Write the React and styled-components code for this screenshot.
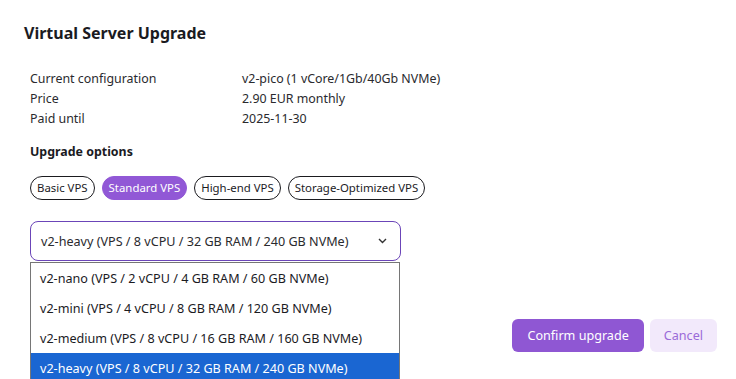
import React from "react";
import styled, { createGlobalStyle } from "styled-components";

const Global = createGlobalStyle`
  html, body { margin: 0; padding: 0; background: #ffffff; }
  body { font-family: "Noto Sans", "Open Sans", sans-serif; color: #1b1b1f; }
  * { box-sizing: border-box; }
`;

const Dialog = styled.div`
  width: 736px;
  height: 379px;
  overflow: hidden;
  padding: 22px 19px 0 24px;
  display: flex;
  flex-direction: column;
`;

const Title = styled.h2`
  margin: 0;
  font-size: 16px;
  font-weight: 700;
  line-height: 22px;
  color: #1b1b1f;
`;

const Info = styled.div`
  margin: 25px 0 0 6px;
  display: grid;
  grid-template-columns: 212px 1fr;
  font-size: 12.4px;
  line-height: 20px;
  color: #2a2a2e;
`;

const Section = styled.div`
  margin: 13px 0 0 6px;
  font-size: 12.4px;
  font-weight: 700;
  line-height: 20px;
`;

const Chips = styled.div`
  margin: 14px 0 0 6px;
  display: flex;
  gap: 7px;
`;

const Chip = styled.button`
  height: 24px;
  padding: 0 6px;
  border-radius: 12px;
  font-family: inherit;
  font-size: 11.4px;
  line-height: 22px;
  border: 1px solid ${(p) => (p.$active ? "#9158d6" : "#1b1b1f")};
  background: ${(p) => (p.$active ? "#9158d6" : "#ffffff")};
  color: ${(p) => (p.$active ? "#ffffff" : "#1b1b1f")};
  cursor: pointer;
`;

const SelectWrap = styled.div`
  position: relative;
  margin: 21px 0 0 6px;
  width: 371px;
`;

const SelectBox = styled.div`
  height: 40px;
  border: 1px solid #6b45b8;
  border-radius: 8px;
  display: flex;
  align-items: center;
  justify-content: space-between;
  padding: 0 13px 0 10px;
  font-size: 12.6px;
  color: #2a2a2e;
`;

const List = styled.ul`
  position: absolute;
  top: 41px;
  left: 0;
  width: 370px;
  margin: 0;
  padding: 0;
  list-style: none;
  background: #ffffff;
  border: 1px solid #767676;
  z-index: 5;
`;

const Option = styled.li`
  height: 30px;
  padding: 0 9px;
  display: flex;
  align-items: center;
  font-size: 12.6px;
  background: ${(p) => (p.$selected ? "#1a66d2" : "#ffffff")};
  color: ${(p) => (p.$selected ? "#ffffff" : "#1b1b1f")};
`;

const Footer = styled.div`
  margin-top: 58px;
  display: flex;
  justify-content: flex-end;
  gap: 6px;
`;

const Button = styled.button`
  height: 33px;
  border: none;
  border-radius: 6px;
  font-family: inherit;
  font-size: 12.6px;
  padding: 0 ${(p) => (p.$primary ? "15px" : "14px")};
  background: ${(p) => (p.$primary ? "#8f57d3" : "#f2e9fb")};
  color: ${(p) => (p.$primary ? "#ffffff" : "#9a6ad8")};
  cursor: pointer;
`;

const Chevron = () => (
  <svg width="9" height="6" viewBox="0 0 9 6" fill="none">
    <path d="M1 1l3.5 3.5L8 1" stroke="#333" strokeWidth="1.4" />
  </svg>
);

const options = [
  "v2-nano (VPS / 2 vCPU / 4 GB RAM / 60 GB NVMe)",
  "v2-mini (VPS / 4 vCPU / 8 GB RAM / 120 GB NVMe)",
  "v2-medium (VPS / 8 vCPU / 16 GB RAM / 160 GB NVMe)",
  "v2-heavy (VPS / 8 vCPU / 32 GB RAM / 240 GB NVMe)",
];

export default function App() {
  return (
    <>
      <Global />
      <Dialog>
        <Title>Virtual Server Upgrade</Title>
        <Info>
          <span>Current configuration</span>
          <span>v2-pico (1 vCore/1Gb/40Gb NVMe)</span>
          <span>Price</span>
          <span>2.90 EUR monthly</span>
          <span>Paid until</span>
          <span>2025-11-30</span>
        </Info>
        <Section>Upgrade options</Section>
        <Chips>
          <Chip>Basic VPS</Chip>
          <Chip $active>Standard VPS</Chip>
          <Chip>High-end VPS</Chip>
          <Chip>Storage-Optimized VPS</Chip>
        </Chips>
        <SelectWrap>
          <SelectBox>
            <span>{options[3]}</span>
            <Chevron />
          </SelectBox>
          <List>
            {options.map((o, i) => (
              <Option key={o} $selected={i === 3}>
                {o}
              </Option>
            ))}
          </List>
        </SelectWrap>
        <Footer>
          <Button $primary>Confirm upgrade</Button>
          <Button>Cancel</Button>
        </Footer>
      </Dialog>
    </>
  );
}
